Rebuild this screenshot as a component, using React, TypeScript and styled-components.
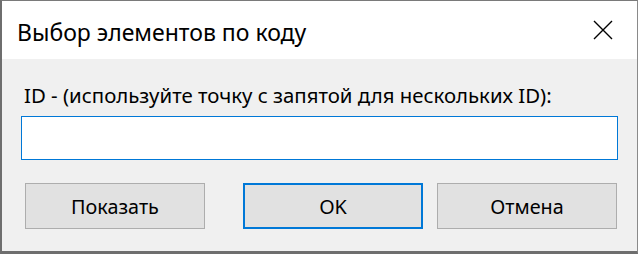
import styled, { createGlobalStyle } from "styled-components";

const GlobalStyle = createGlobalStyle`
  html, body {
    margin: 0;
    padding: 0;
    background: #ffffff;
  }
  body {
    font-family: "Noto Sans", "Open Sans", "Liberation Sans", sans-serif;
  }
`;

function CloseIcon() {
  return (
    <svg width="20" height="20" viewBox="0 0 20 20">
      <path d="M1 1 L19 19 M19 1 L1 19" stroke="#000" strokeWidth="1.4" fill="none" />
    </svg>
  );
}

function App() {
  return (
    <>
      <GlobalStyle />
      <Screen>
        <Dialog>
          <TitleBar>
            <Title>Выбор элементов по коду</Title>
            <CloseButton aria-label="Закрыть">
              <CloseIcon />
            </CloseButton>
          </TitleBar>
          <Body>
            <Label>ID - (используйте точку с запятой для нескольких ID):</Label>
            <IdInput />
            <ButtonRow>
              <DialogButton>Показать</DialogButton>
              <DialogButton $primary $offset={38}>
                OK
              </DialogButton>
              <DialogButton $offset={14}>Отмена</DialogButton>
            </ButtonRow>
          </Body>
        </Dialog>
      </Screen>
    </>
  );
}

export default App;

const Screen = styled.div`
  width: 639px;
  height: 254px;
  overflow: hidden;
  background: #ffffff;
`;

const Dialog = styled.div`
  box-sizing: border-box;
  width: 638px;
  height: 254px;
  display: flex;
  flex-direction: column;
  border-top: 1px solid #7a7a7a;
  border-right: 1px solid #8a8a8a;
  border-left: 2px solid #6e6e6e;
  border-bottom: 3px solid #6e6e6e;
  background: #f0f0f0;
`;

const TitleBar = styled.div`
  height: 58px;
  display: flex;
  align-items: center;
  justify-content: space-between;
  background: #ffffff;
  padding-left: 15px;
`;

const Title = styled.span`
  font-size: 23px;
  color: #000000;
  padding-top: 3px;
`;

const CloseButton = styled.div`
  width: 64px;
  height: 58px;
  display: flex;
  align-items: center;
  justify-content: center;
  margin-right: 2px;
`;

const Body = styled.div`
  flex: 1;
  display: flex;
  flex-direction: column;
  padding: 22px 19px 0 19px;
`;

const Label = styled.div`
  font-size: 20.4px;
  line-height: 28px;
  color: #000000;
  padding-left: 3px;
`;

const IdInput = styled.input`
  box-sizing: border-box;
  margin-top: 7px;
  height: 44px;
  width: 100%;
  border: 1px solid #0078d7;
  background: #ffffff;
  outline: none;
  font-size: 20px;
  font-family: inherit;
`;

const ButtonRow = styled.div`
  display: flex;
  margin-top: 23px;
  padding-left: 4px;
`;

const DialogButton = styled.div<{ $primary?: boolean; $offset?: number }>`
  box-sizing: border-box;
  width: 180px;
  height: 46px;
  margin-left: ${(p) => p.$offset ?? 0}px;
  display: flex;
  align-items: center;
  justify-content: center;
  background: #e1e1e1;
  border: ${(p) => (p.$primary ? "2px solid #0078d7" : "1px solid #adadad")};
  font-size: 19.8px;
  color: #000000;
`;
